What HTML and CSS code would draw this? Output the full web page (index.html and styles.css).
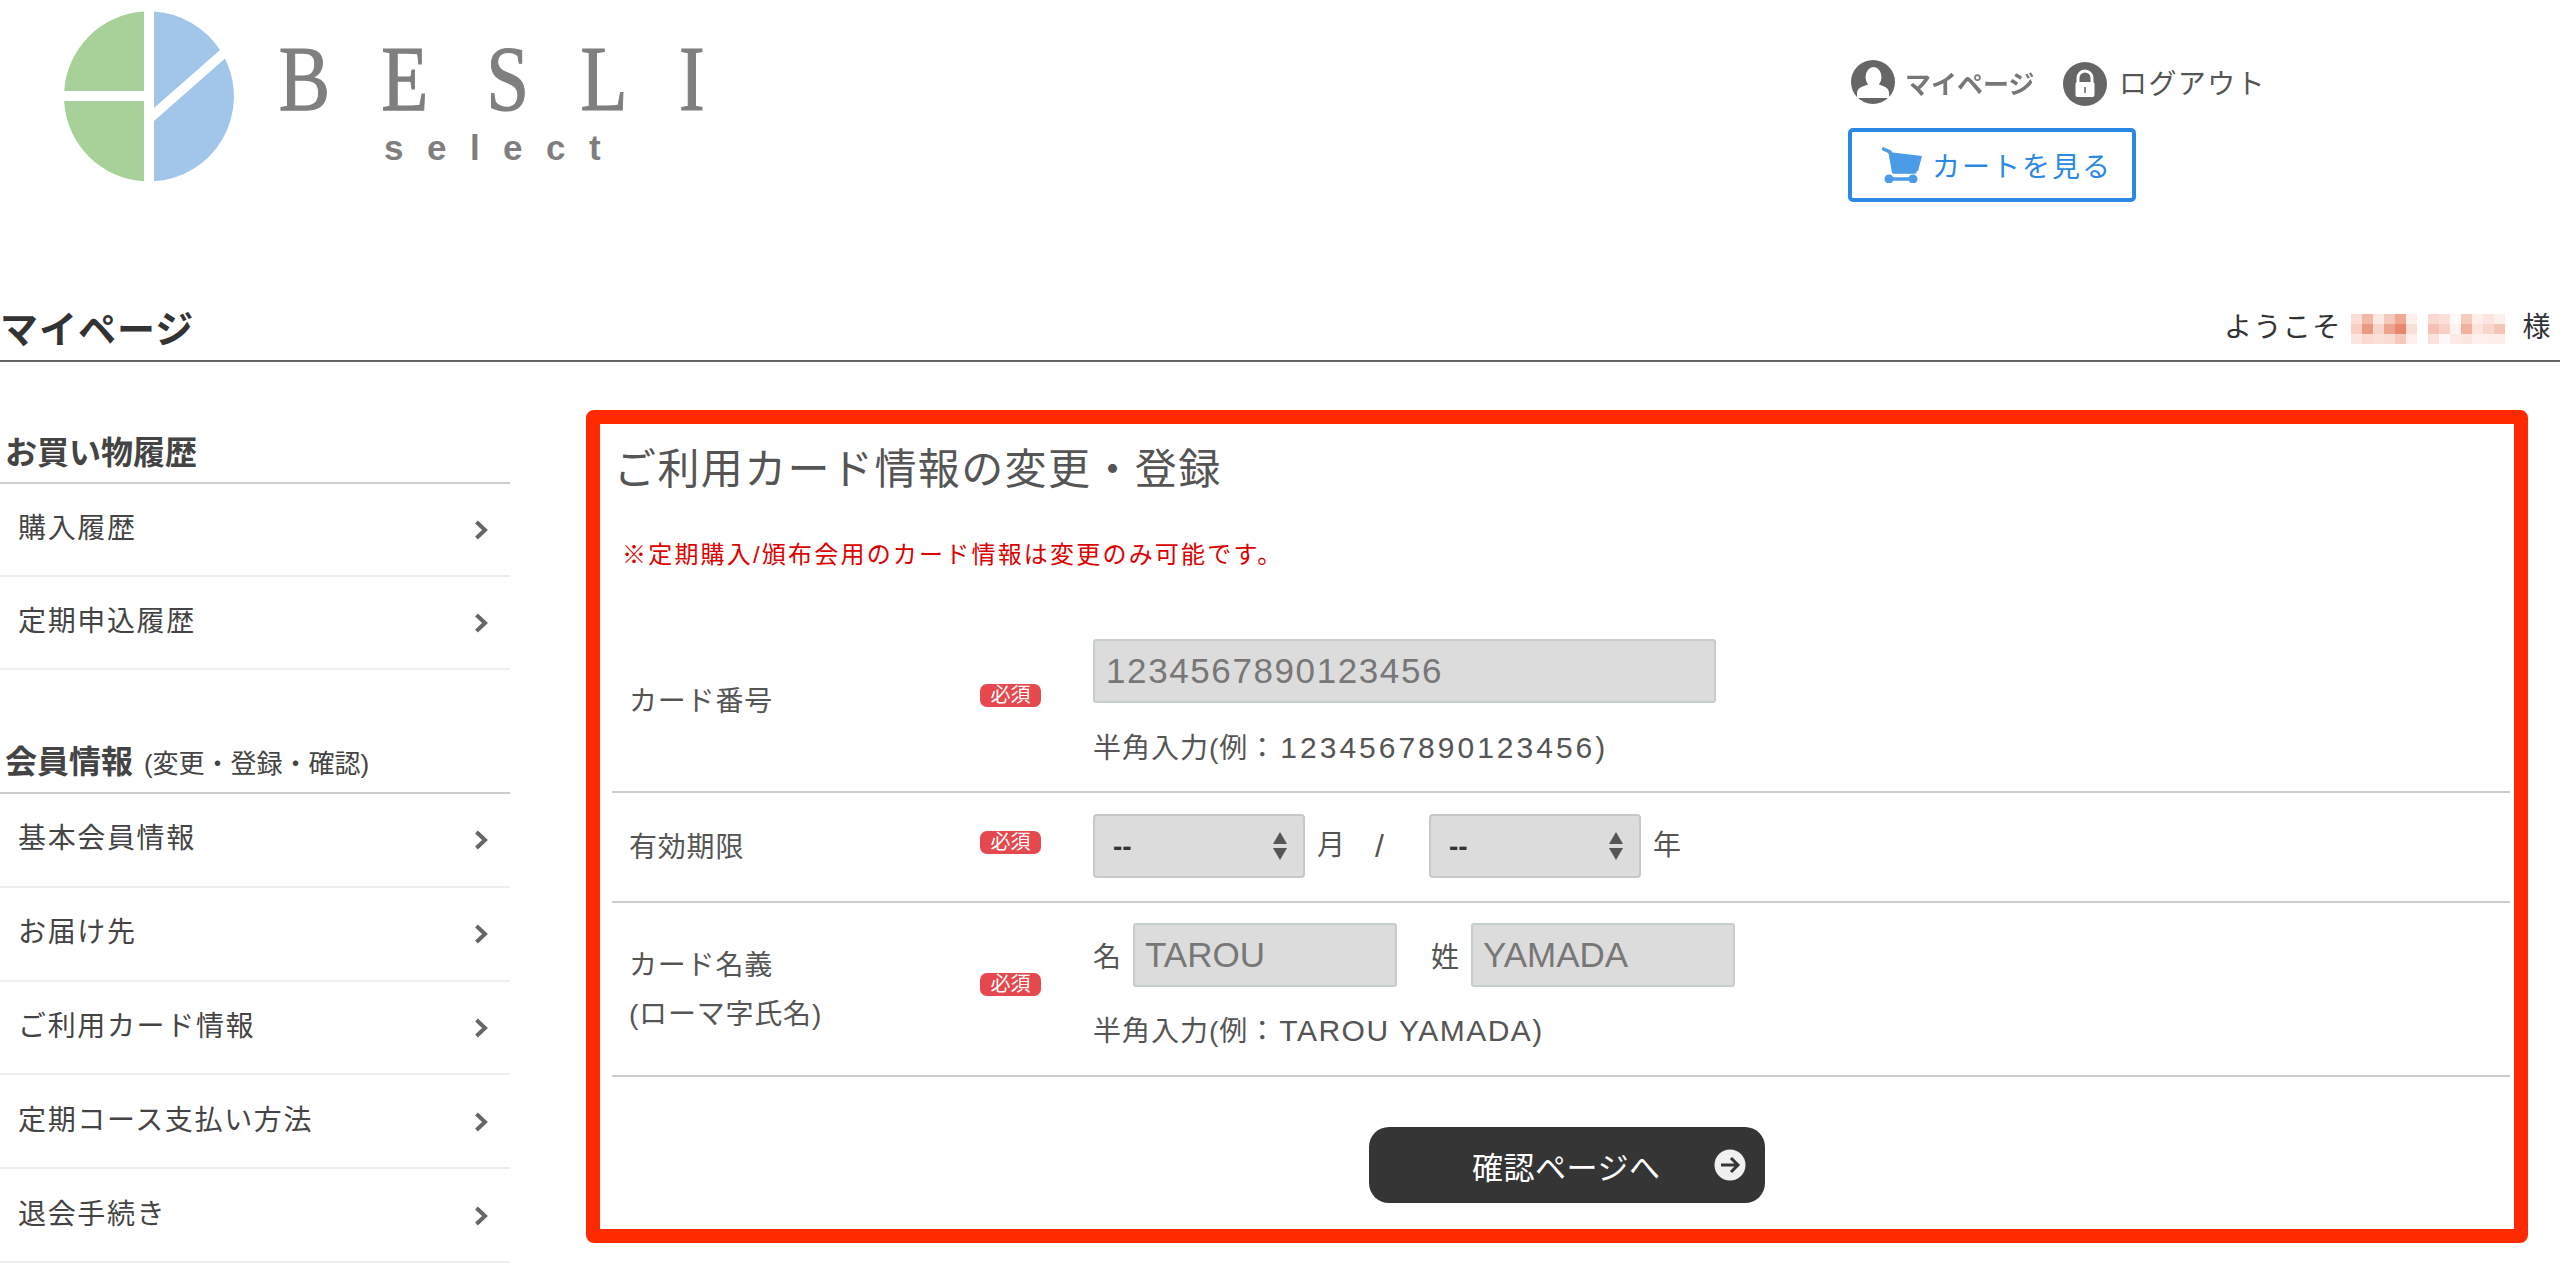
FILE: index.html
```html
<!DOCTYPE html>
<html lang="ja">
<head>
<meta charset="utf-8">
<title>ご利用カード情報の変更・登録</title>
<link rel="stylesheet" href="styles.css">
</head>
<body>
<header class="site-header">
  <a class="logo" href="#" aria-label="BESLI select">
    <svg class="logo-svg" viewBox="0 0 720 200" width="720" height="200">
      <path class="pie-green" d="M144 11.6A85 85 0 0 0 64.2 91H144Z"/>
      <path class="pie-green" d="M144 101H64.1A85 85 0 0 0 144 181.3Z"/>
      <path class="pie-blue" d="M154 11.6A85 85 0 0 1 220 50L154 108Z"/>
      <path class="pie-blue" d="M225 58.5A85 85 0 0 1 154 181.3V121Z"/>
      <text class="logo-main" transform="scale(.82 1)" x="340 465 593 708 828" y="110">BESLI</text>
      <text class="logo-sub" x="384 427 470 503 546 589" y="160">select</text>
    </svg>
  </a>
  <div class="account">
    <nav class="account-links">
      <a class="account-link link-mypage" href="#">
        <svg class="round-icon" viewBox="0 0 44 44" width="44" height="44">
          <circle cx="22" cy="22" r="22" fill="#666"/>
          <ellipse cx="22.500" cy="17" rx="8" ry="10" fill="#fff"/>
          <path d="M6 38V33Q6 28 13 26L18 24H27L32 26Q38 28 38 33V38Z" fill="#fff"/>
        </svg>
        <span class="mypage-text">マイページ</span>
      </a>
      <a class="account-link link-logout" href="#">
        <svg class="round-icon" viewBox="0 0 44 44" width="44" height="44">
          <circle cx="22" cy="22" r="22" fill="#666"/>
          <path d="M15 21V16A7 7 0 0 1 29 16V21" fill="none" stroke="#fff" stroke-width="3"/>
          <rect x="12.500" y="20" width="19" height="15" rx="2" fill="#fff"/>
          <rect x="21" y="25" width="2" height="6" fill="#888"/>
        </svg>
        <span>ログアウト</span>
      </a>
    </nav>
    <a class="cart-button" href="#">
      <svg class="cart-icon" viewBox="0 0 40 36" width="40" height="36">
        <path d="M1.500 2L8 5L12.500 25H33" fill="none" stroke="#4a9be8" stroke-width="3.500" stroke-linecap="round"/>
        <path d="M6.500 5L40 9L36 24L10 26Z" fill="#4a9be8"/>
        <path d="M6 32H32" stroke="#4a9be8" stroke-width="3.500"/>
        <circle cx="7" cy="32" r="4.500" fill="#4a9be8"/>
        <circle cx="31" cy="32" r="4.500" fill="#4a9be8"/>
      </svg>
      <span>カートを見る</span>
    </a>
  </div>
</header>

<div class="title-bar">
  <h1 class="page-title">マイページ</h1>
  <p class="welcome">
    <span>ようこそ</span>
    <svg class="mosaic" viewBox="0 0 155 30" width="155" height="30" aria-hidden="true">
      <g>
        <rect x="0" y="0" width="11" height="10" fill="#f9ddd6"/><rect x="11" y="0" width="11" height="10" fill="#f3b8a8"/><rect x="22" y="0" width="11" height="10" fill="#fce9e4"/><rect x="33" y="0" width="11" height="10" fill="#f5c8bc"/><rect x="44" y="0" width="11" height="10" fill="#f0a892"/><rect x="55" y="0" width="11" height="10" fill="#fdf0ec"/>
        <rect x="0" y="10" width="11" height="10" fill="#f7cfc4"/><rect x="11" y="10" width="11" height="10" fill="#ea9a82"/><rect x="22" y="10" width="11" height="10" fill="#f8d5cb"/><rect x="33" y="10" width="11" height="10" fill="#eca48f"/><rect x="44" y="10" width="11" height="10" fill="#e8876b"/><rect x="55" y="10" width="11" height="10" fill="#fadfd8"/>
        <rect x="0" y="20" width="11" height="10" fill="#fbe6e0"/><rect x="11" y="20" width="11" height="10" fill="#f9d9d0"/><rect x="22" y="20" width="11" height="10" fill="#fae0d9"/><rect x="33" y="20" width="11" height="10" fill="#fadcd4"/><rect x="44" y="20" width="11" height="10" fill="#f6c9bd"/><rect x="55" y="20" width="11" height="10" fill="#fdefeb"/>
      </g>
      <g transform="translate(77 0)">
        <rect x="0" y="0" width="11" height="10" fill="#fad9d0"/><rect x="11" y="0" width="11" height="10" fill="#fbe0d9"/><rect x="22" y="0" width="11" height="10" fill="#fefafa"/><rect x="33" y="0" width="11" height="10" fill="#f6cabd"/><rect x="44" y="0" width="11" height="10" fill="#fdf0ed"/><rect x="55" y="0" width="11" height="10" fill="#fce5e0"/><rect x="66" y="0" width="11" height="10" fill="#fdefeb"/>
        <rect x="0" y="10" width="11" height="10" fill="#f6c1b2"/><rect x="11" y="10" width="11" height="10" fill="#f8d2c8"/><rect x="22" y="10" width="11" height="10" fill="#fdf3f0"/><rect x="33" y="10" width="11" height="10" fill="#f2b09e"/><rect x="44" y="10" width="11" height="10" fill="#fce4df"/><rect x="55" y="10" width="11" height="10" fill="#f9d5cc"/><rect x="66" y="10" width="11" height="10" fill="#f6c4b7"/>
        <rect x="0" y="20" width="11" height="10" fill="#fbe2dc"/><rect x="11" y="20" width="11" height="10" fill="#fffafa"/><rect x="22" y="20" width="11" height="10" fill="#fdeae6"/><rect x="33" y="20" width="11" height="10" fill="#fce6e1"/><rect x="44" y="20" width="11" height="10" fill="#fdefec"/><rect x="55" y="20" width="11" height="10" fill="#fdefec"/><rect x="66" y="20" width="11" height="10" fill="#fdeeea"/>
      </g>
    </svg>
    <span>様</span>
  </p>
</div>

<main class="layout">
  <aside class="sidebar">
    <section class="side-group">
      <h3 class="side-heading">お買い物履歴</h3>
      <ul class="side-list">
        <li><a class="side-item" href="#">購入履歴<svg class="chevron" viewBox="0 0 14 20" width="14" height="20"><path d="M2.500 2L11 10L2.500 18"/></svg></a></li>
        <li><a class="side-item" href="#">定期申込履歴<svg class="chevron" viewBox="0 0 14 20" width="14" height="20"><path d="M2.500 2L11 10L2.500 18"/></svg></a></li>
      </ul>
    </section>
    <section class="side-group">
      <h3 class="side-heading">会員情報 <small class="side-sub">(変更・登録・確認)</small></h3>
      <ul class="side-list">
        <li><a class="side-item" href="#">基本会員情報<svg class="chevron" viewBox="0 0 14 20" width="14" height="20"><path d="M2.500 2L11 10L2.500 18"/></svg></a></li>
        <li><a class="side-item" href="#">お届け先<svg class="chevron" viewBox="0 0 14 20" width="14" height="20"><path d="M2.500 2L11 10L2.500 18"/></svg></a></li>
        <li><a class="side-item" href="#">ご利用カード情報<svg class="chevron" viewBox="0 0 14 20" width="14" height="20"><path d="M2.500 2L11 10L2.500 18"/></svg></a></li>
        <li><a class="side-item" href="#">定期コース支払い方法<svg class="chevron" viewBox="0 0 14 20" width="14" height="20"><path d="M2.500 2L11 10L2.500 18"/></svg></a></li>
        <li><a class="side-item" href="#">退会手続き<svg class="chevron" viewBox="0 0 14 20" width="14" height="20"><path d="M2.500 2L11 10L2.500 18"/></svg></a></li>
      </ul>
    </section>
  </aside>

  <section class="card-panel">
    <h2 class="panel-title">ご利用カード情報の変更・登録</h2>
    <p class="panel-note">※定期購入/頒布会用のカード情報は変更のみ可能です。</p>

    <form class="card-form">
      <div class="form-row row-number">
        <div class="form-label">カード番号</div>
        <div><span class="badge">必須</span></div>
        <div class="form-field">
          <input class="text-input input-number" type="text" value="1234567890123456" readonly>
          <p class="hint">半角入力(例：<span class="hint-digits">1234567890123456)</span></p>
        </div>
      </div>
      <div class="form-row row-expiry">
        <div class="form-label">有効期限</div>
        <div><span class="badge">必須</span></div>
        <div class="form-field field-inline">
          <div class="select-wrap">
            <select class="select-input"><option>--</option></select>
            <svg class="select-arrows" viewBox="0 0 16 28" width="16" height="28"><path d="M8 0L15 12H1Z"/><path d="M8 28L15 16H1Z"/></svg>
          </div>
          <span class="unit">月</span>
          <span class="slash">/</span>
          <div class="select-wrap">
            <select class="select-input"><option>--</option></select>
            <svg class="select-arrows" viewBox="0 0 16 28" width="16" height="28"><path d="M8 0L15 12H1Z"/><path d="M8 28L15 16H1Z"/></svg>
          </div>
          <span class="unit">年</span>
        </div>
      </div>
      <div class="form-row row-name">
        <div class="form-label">カード名義<br>(ローマ字氏名)</div>
        <div><span class="badge">必須</span></div>
        <div class="form-field">
          <div class="name-fields">
            <span class="name-part">名</span>
            <input class="text-input input-name" type="text" value="TAROU" readonly>
            <span class="name-part">姓</span>
            <input class="text-input input-name" type="text" value="YAMADA" readonly>
          </div>
          <p class="hint hint-name">半角入力(例：<span class="hint-latin">TAROU YAMADA)</span></p>
        </div>
      </div>
      <a class="confirm-button" href="#">
        <span>確認ページへ</span>
        <svg class="confirm-icon" viewBox="0 0 32 32" width="32" height="32">
          <circle cx="16" cy="16" r="15.500" fill="#f0f0f0"/>
          <path d="M7 16H24M17 9L24 16L17 23" fill="none" stroke="#353535" stroke-width="3"/>
        </svg>
      </a>
    </form>
  </section>
</main>
</body>
</html>
```

FILE: styles.css
```css
* { box-sizing: border-box; }
html, body { margin: 0; padding: 0; }
body {
  width: 2560px;
  height: 1274px;
  overflow: hidden;
  background: #fff;
  color: #333;
  font-family: "Liberation Sans", "Noto Sans CJK JP", sans-serif;
  font-size: 28px;
}
a { color: inherit; text-decoration: none; }
h1, h2, h3, p, ul { margin: 0; padding: 0; }
ul { list-style: none; }

/* Header */
.site-header {
  height: 300px;
  display: flex;
  justify-content: space-between;
}
.logo { display: block; height: 200px; }
.logo-svg { display: block; }
.pie-green { fill: #a8d199; }
.pie-blue { fill: #a2c6e9; }
.logo-main {
  font-family: "Liberation Serif", serif;
  font-size: 94px;
  fill: #7f7f7f;
  stroke: #7f7f7f;
  stroke-width: 1.2px;
}
.logo-sub {
  font-family: "Liberation Sans", sans-serif;
  font-weight: 700;
  font-size: 35px;
  fill: #7f7f7f;
}
.account {
  width: 712px;
  padding-top: 59px;
}
.account-links {
  display: flex;
  height: 46px;
  margin-bottom: 23px;
  align-items: center;
}
.account-link {
  display: flex;
  align-items: center;
  color: #555;
}
.round-icon { display: block; filter: blur(.5px); }
.link-mypage { margin-left: 3px; width: 212px; }
.mypage-text {
  margin-left: 10px;
  font-size: 26px;
  font-weight: 700;
  color: #777;
  filter: blur(.5px);
}
.link-logout span { margin-left: 12px; letter-spacing: 1.4px; }
.link-logout .round-icon { margin-top: 3px; }
.cart-button {
  width: 288px;
  height: 74px;
  display: flex;
  align-items: center;
  padding-left: 30px;
  border: 4px solid #2b88e4;
  border-radius: 5px;
  color: #2b88e4;
  letter-spacing: 2px;
}
.cart-icon { display: block; filter: blur(.4px); margin-right: 10px; }

/* Title bar */
.title-bar {
  height: 62px;
  display: flex;
  justify-content: space-between;
  align-items: center;
  border-bottom: 2px solid #666;
  padding-right: 8px;
}
.page-title {
  font-size: 38px;
  line-height: 60px;
  font-weight: 700;
  letter-spacing: 1px;
  color: #333;
}
.welcome {
  display: flex;
  align-items: center;
  gap: 12px;
  margin-bottom: 4px;
  letter-spacing: 1.4px;
  line-height: 40px;
}
.mosaic { display: block; filter: blur(.3px); margin: 2px 5px 0 -3px; }

/* Main layout */
.layout {
  display: flex;
  align-items: flex-start;
  padding-top: 48px;
}
.sidebar {
  width: 510px;
  margin-right: 76px;
  padding-top: 26px;
  color: #444;
}
.side-group + .side-group { margin-top: 76px; }
.side-group + .side-group .side-item { height: 93.8px; }
.side-group + .side-group .side-heading { line-height: 33px; }
.side-heading {
  height: 48px;
  line-height: 34px;
  padding-left: 5px;
  font-size: 32px;
  font-weight: 700;
  border-bottom: 2px solid #ccc;
  white-space: nowrap;
}
.side-sub {
  font-size: 26px;
  font-weight: 400;
  margin-left: 2px;
}
.side-item {
  height: 93px;
  display: flex;
  justify-content: space-between;
  align-items: center;
  padding: 0 22px 7px 18px;
  border-bottom: 2px solid #eee;
  letter-spacing: 1.65px;
}
.chevron {
  display: block;
  margin-top: 8px;
  fill: none;
  stroke: #666;
  stroke-width: 4;
}

/* Panel */
.card-panel {
  width: 1942px;
  height: 833px;
  border: 14px solid #ff2a00;
  border-radius: 8px;
  padding: 16px 4px 26px 12px;
  color: #555;
}
.panel-title {
  font-size: 42px;
  line-height: 60px;
  font-weight: 400;
  letter-spacing: 1.4px;
  padding-left: 2px;
  color: #555;
}
.panel-note {
  margin-top: 37px;
  padding-left: 10px;
  font-size: 24px;
  line-height: 36px;
  letter-spacing: 2.2px;
  color: #dd0000;
}
.card-form { margin-top: 36px; }
.form-row {
  display: grid;
  grid-template-columns: 368px 113px 1fr;
  align-items: center;
  border-bottom: 2px solid #ccc;
}
.row-number { height: 184px; }
.row-expiry { height: 110px; }
.row-name { height: 174px; }
.form-label {
  padding-left: 17px;
  line-height: 49px;
  letter-spacing: .8px;
  margin-top: 2px;
}
.row-number .form-label { margin-top: 3px; }
.row-expiry .form-label { margin-top: 0; }
.badge {
  display: block;
  width: 61px;
  height: 23px;
  margin-bottom: 10px;
  border-radius: 7px;
  background: #e5484d;
  color: #fff;
  font-size: 20px;
  line-height: 23px;
  text-align: center;
}
.form-field { align-self: start; }
.row-number .form-field { padding-top: 30px; }
.row-expiry .form-field { padding-top: 21px; }
.row-name .form-field { padding-top: 20px; }

.text-input {
  display: block;
  height: 64px;
  padding: 0 10px;
  border: 2px solid #c5cdcd;
  border-radius: 3px;
  background: #dcdcdc;
  color: #777;
  font-family: inherit;
  font-size: 35px;
  outline: none;
}
.input-number { width: 623px; letter-spacing: 1.6px; padding-left: 11px; }
.input-name { width: 264px; }
.hint {
  margin-top: 27px;
  line-height: 36px;
  letter-spacing: 1px;
  color: #555;
}
.hint-name { margin-top: 26px; }
.hint-digits { font-size: 30px; letter-spacing: 3px; margin-left: 3px; }
.hint-latin { font-size: 30px; letter-spacing: 1.5px; margin-left: 2px; }

.field-inline {
  display: flex;
  align-items: flex-start;
}
.select-wrap {
  position: relative;
  width: 212px;
  height: 64px;
}
.select-input {
  display: block;
  width: 100%;
  height: 100%;
  appearance: none;
  -webkit-appearance: none;
  padding: 0 0 0 18px;
  border: 2px solid #c8c8c8;
  border-radius: 4px;
  background: #dcdcdc;
  color: #333;
  font-family: inherit;
  font-size: 28px;
  font-weight: 700;
  outline: none;
}
.select-arrows {
  position: absolute;
  right: 17px;
  top: 18px;
  fill: #555;
}
.unit {
  line-height: 36px;
  margin: 14px 0 0 12px;
}
.slash {
  width: 85px;
  line-height: 36px;
  margin-top: 14px;
  padding-left: 31px;
  font-size: 32px;
}
.row-expiry .unit:nth-of-type(1) { width: 27px; }

.name-fields {
  display: flex;
  align-items: center;
}
.name-part { width: 40px; }
.input-name + .name-part { margin-left: 34px; }

.confirm-button {
  width: 396px;
  height: 76px;
  margin: 50px 0 0 757px;
  display: flex;
  align-items: center;
  justify-content: space-between;
  padding: 0 19px 0 103px;
  border-radius: 20px;
  background: #353535;
  color: #fff;
  font-size: 31px;
  letter-spacing: .5px;
}
.confirm-icon { display: block; filter: blur(.3px); }
```
